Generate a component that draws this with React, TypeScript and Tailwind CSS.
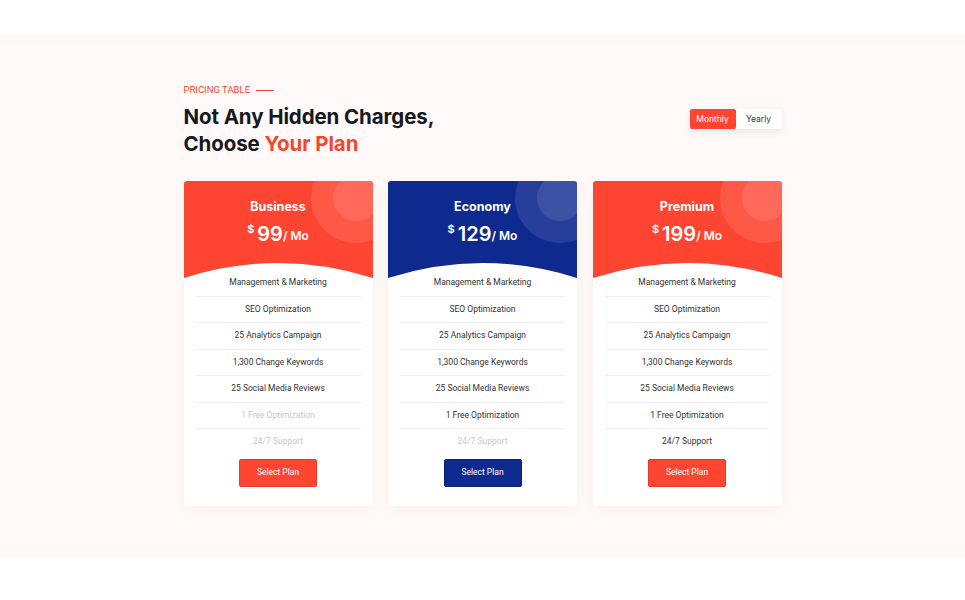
import React from 'react';

interface Plan {
  name: string;
  price: string;
  theme: 'red' | 'blue';
  enabled: number;
}

const features = [
  'Management & Marketing',
  'SEO Optimization',
  '25 Analytics Campaign',
  '1,300 Change Keywords',
  '25 Social Media Reviews',
  '1 Free Optimization',
  '24/7 Support',
];

const plans: Plan[] = [
  { name: 'Business', price: '99', theme: 'red', enabled: 5 },
  { name: 'Economy', price: '129', theme: 'blue', enabled: 6 },
  { name: 'Premium', price: '199', theme: 'red', enabled: 7 },
];

const PlanCard: React.FC<{ plan: Plan }> = ({ plan }) => {
  const isBlue = plan.theme === 'blue';
  return (
    <div className="w-[189px] h-[325px] bg-white rounded-[3px] overflow-hidden shadow-[0_4px_14px_rgba(120,60,40,0.06)] flex flex-col">
      {/* Header with decorative circles and curved bottom */}
      <div
        className={`relative h-[97px] overflow-hidden ${isBlue ? 'bg-[#0f2a8f]' : 'bg-[#fe4532]'}`}
      >
        <div className="absolute w-[90px] h-[90px] rounded-full bg-white/10 -right-[28px] -top-[28px]" />
        <div className="absolute w-[46px] h-[46px] rounded-full bg-white/10 -right-[6px] -top-[6px]" />
        <div className="relative flex flex-col items-center pt-[17px] text-white">
          <div className="text-[12.5px] font-bold leading-[18px]">{plan.name}</div>
          <div className="flex items-start mt-[7px]">
            <span className="text-[11px] font-semibold leading-[12px] mr-[3px]">$</span>
            <span className="text-[20px] font-semibold leading-[22px]">{plan.price}</span>
            <span className="text-[12px] font-semibold leading-[12px] mt-[7px]">/ Mo</span>
          </div>
        </div>
        <svg
          className="absolute left-0 bottom-0"
          width="189"
          height="16"
          viewBox="0 0 189 16"
          preserveAspectRatio="none"
        >
          <path d="M0 16 Q94.5 -14 189 16 Z" fill="#ffffff" />
        </svg>
      </div>

      {/* Feature list */}
      <ul className="relative -mt-[9px] px-[12px]" style={{ fontFamily: 'Roboto, "Liberation Sans", sans-serif' }}>
        {features.map((f, i) => (
          <li
            key={f}
            className={`h-[26.5px] flex items-center justify-center text-[8.5px] ${
              i > 0 ? 'border-t border-[#efefef]' : ''
            } ${i < plan.enabled ? 'text-[#333]' : 'text-[#c9c9c9]'}`}
          >
            {f}
          </li>
        ))}
      </ul>

      <button
        className={`mx-auto mt-[4px] w-[78px] h-[28px] rounded-[2px] text-white text-[8.5px] border ${
          isBlue ? 'bg-[#0f2a8f] border-[#0a2070]' : 'bg-[#fe4532] border-[#e93a28]'
        }`}
        style={{ fontFamily: 'Roboto, "Liberation Sans", sans-serif' }}
      >
        Select Plan
      </button>
    </div>
  );
};

export default function App() {
  return (
    <div className="w-full h-[600px] bg-white" style={{ fontFamily: 'Inter, "Open Sans", sans-serif' }}>
      <div className="h-[35px]" />
      <section className="bg-[#fffaf9] h-[523px] pt-[49px]">
        <div className="w-[598px] mx-auto">
          {/* Heading row */}
          <div className="flex justify-between items-start">
            <div>
              <div
                className="flex items-center gap-[6px] text-[#f4472f] text-[9.5px] leading-[12px]"
                style={{ fontFamily: 'Roboto, "Liberation Sans", sans-serif' }}
              >
                PRICING TABLE
                <span className="w-[18px] h-px bg-[#f4472f]" />
              </div>
              <h2 className="mt-[7px] text-[20.5px] font-bold leading-[27px] text-[#16181b] tracking-[-0.1px]">
                Not Any Hidden Charges,
                <br />
                Choose <span className="text-[#f4472f]">Your Plan</span>
              </h2>
            </div>
            <div className="mt-[25px] flex bg-white rounded-[3px] shadow-[0_3px_10px_rgba(0,0,0,0.08)]">
              <button className="w-[46px] h-[20px] bg-[#fe4532] text-white text-[8.5px] rounded-[2px]">
                Monthly
              </button>
              <button className="w-[46px] h-[20px] text-[#333] text-[8.5px]">Yearly</button>
            </div>
          </div>

          {/* Cards */}
          <div className="mt-[24px] flex justify-between">
            {plans.map((p) => (
              <PlanCard key={p.name} plan={p} />
            ))}
          </div>
        </div>
      </section>
    </div>
  );
}
